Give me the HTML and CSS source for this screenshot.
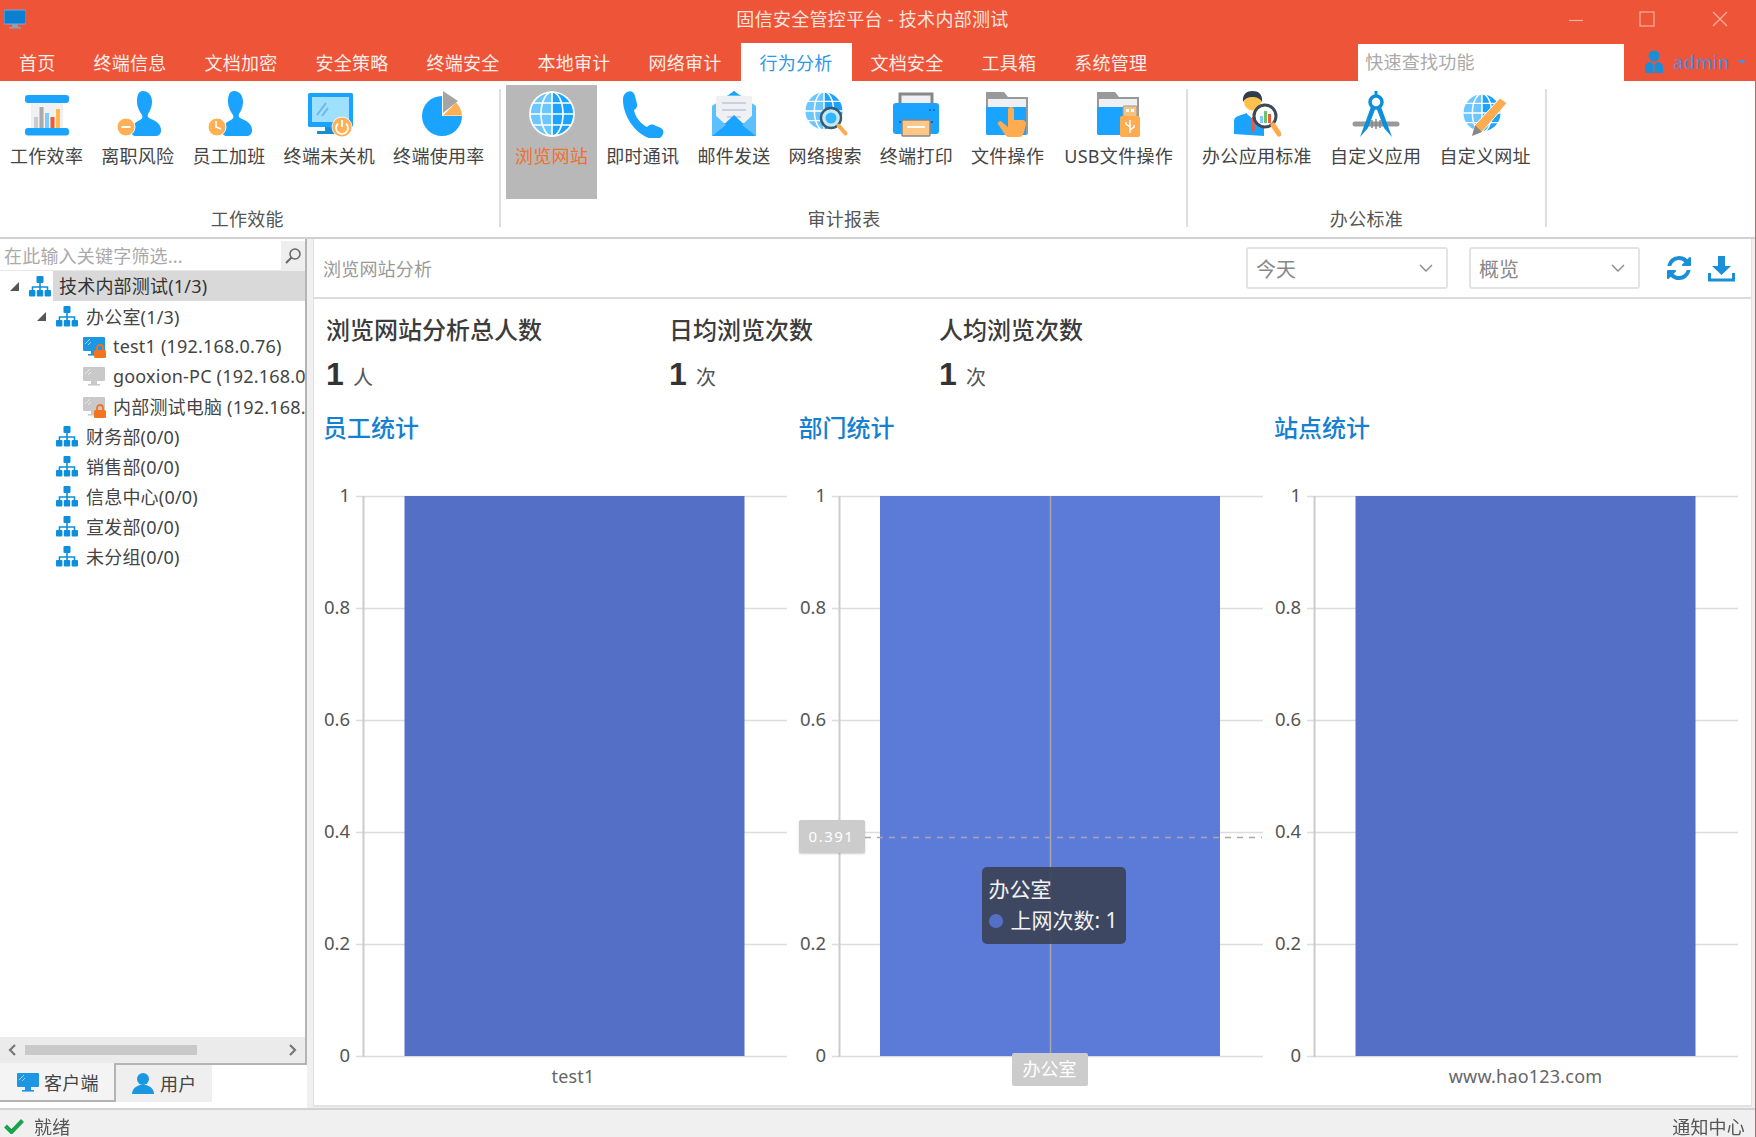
FILE: index.html
```html
<!DOCTYPE html>
<html lang="zh-CN">
<head>
<meta charset="utf-8">
<title>固信安全管控平台 - 技术内部测试</title>
<link rel="stylesheet" href="styles.css">
</head>
<body>
<svg class="defs" aria-hidden="true">
  <symbol id="org" viewBox="0 0 22 22">
    <path d="M11 8v4M3.5 15v-3h15v3M11 12v3" fill="none" stroke="#0d8fdb" stroke-width="1.6"/>
    <rect x="7.5" y="1" width="7" height="7" rx="1" fill="#0d8fdb"/>
    <rect x="0" y="15" width="6.4" height="6.4" rx="1" fill="#0d8fdb"/>
    <rect x="7.8" y="15" width="6.4" height="6.4" rx="1" fill="#0d8fdb"/>
    <rect x="15.6" y="15" width="6.4" height="6.4" rx="1" fill="#0d8fdb"/>
  </symbol>
  <symbol id="pc" viewBox="0 0 22 20">
    <rect x="0" y="1" width="22" height="14" rx="1" fill="currentColor"/>
    <rect x="8" y="15" width="6" height="3" fill="currentColor"/>
    <rect x="5" y="18" width="12" height="1.6" fill="currentColor"/>
    <path d="M2 8l5-5M5 9l3-3" stroke="#fff" stroke-opacity=".6" stroke-width="1"/>
  </symbol>
  <symbol id="lock" viewBox="0 0 12 14">
    <path d="M3 6V4a3 3 0 016 0v2" fill="none" stroke="#f4731f" stroke-width="1.8"/>
    <rect x="0" y="6" width="12" height="8" rx="1.5" fill="#f4731f"/>
  </symbol>
  <symbol id="person" viewBox="0 0 48 48">
    <path d="M29 1c6 0 9 5 9 11 0 5-2 9-4 12-1 2 0 4 3 5 5 2 10 5 10 11 0 4-2 6-6 6H22c-3 0-5-2-5-5 0-6 5-9 9-11 2-1 3-3 2-5-2-3-5-8-5-13 0-6 1-11 6-11z" fill="#1aa3ff"/>
  </symbol>
  <symbol id="globe" viewBox="0 0 48 48">
    <circle cx="24" cy="24" r="22" fill="#1aa3ff"/>
    <path d="M2 24a22 22 0 0122-22v44A22 22 0 012 24z" fill="#6cc6ff"/>
    <g fill="none" stroke="#fff" stroke-width="1.7">
      <circle cx="24" cy="24" r="22"/>
      <ellipse cx="24" cy="24" rx="11" ry="22"/>
      <path d="M24 2v44M4 13h40M2 24h44M4 35h40"/>
    </g>
  </symbol>
</svg>
<div class="window">
  <header class="titlebar">
    <div class="title-left">
      <svg class="app-icon" viewBox="0 0 22 20"><rect x="0" y="1" width="22" height="14" rx="1" fill="#0b7fd0" stroke="#7aa9d8"/><rect x="8" y="15" width="6" height="3" fill="#8aa0b5"/><rect x="5" y="18" width="12" height="1.5" fill="#8aa0b5"/></svg>
    </div>
    <div class="title-text">固信安全管控平台 - 技术内部测试</div>
    <div class="win-controls">
      <svg viewBox="0 0 16 16"><path d="M1 9.5h14" /></svg>
      <svg viewBox="0 0 16 16"><rect x="1" y="1" width="14" height="14" /></svg>
      <svg viewBox="0 0 16 16"><path d="M1 1l14 14M15 1L1 15" /></svg>
    </div>
  </header>

  <nav class="navbar">
    <a class="tab">首页</a>
    <a class="tab">终端信息</a>
    <a class="tab">文档加密</a>
    <a class="tab">安全策略</a>
    <a class="tab">终端安全</a>
    <a class="tab">本地审计</a>
    <a class="tab">网络审计</a>
    <a class="tab active">行为分析</a>
    <a class="tab">文档安全</a>
    <a class="tab">工具箱</a>
    <a class="tab">系统管理</a>
    <div class="quick-search">快速查找功能</div>
    <div class="account">
      <svg class="account-icon" viewBox="0 0 20 24"><circle cx="10" cy="6" r="5.5" fill="#1a8fd8"/><path d="M1 23v-6c0-3 3-5 6-5l3 3 3-3c3 0 6 2 6 5v6z" fill="#1a8fd8"/><path d="M10 15v8" stroke="#ee5437"/></svg>
      <span class="account-name">admin</span>
      <span class="account-caret"></span>
    </div>
  </nav>

  <section class="ribbon">
    <div class="group group-a">
      <div class="items">
        <div class="item">
          <svg class="ri" viewBox="0 0 48 48"><rect x="8" y="12" width="32" height="27" fill="#f1f1f1"/><rect x="11" y="27" width="4" height="11" fill="#c8ccd2"/><rect x="16.500" y="17" width="4" height="21" fill="#aaa"/><rect x="22" y="23" width="4" height="15" fill="#7ccbff"/><rect x="27.500" y="27" width="4" height="11" fill="#f05a3a"/><rect x="33" y="19" width="4" height="19" fill="#ffb84d"/><rect x="2" y="5" width="44" height="8" rx="3" fill="#1aa3ff"/><rect x="2" y="38" width="44" height="7.500" rx="3" fill="#1aa3ff"/></svg>
          <span>工作效率</span>
        </div>
        <div class="item">
          <svg class="ri" viewBox="0 0 48 48"><use href="#person"/><circle cx="12" cy="37" r="9" fill="#ffb055" stroke="#fff" stroke-width="1"/><path d="M7.500 37h9" stroke="#fff" stroke-width="2"/></svg>
          <span>离职风险</span>
        </div>
        <div class="item">
          <svg class="ri" viewBox="0 0 48 48"><use href="#person"/><circle cx="12" cy="37" r="9" fill="#ffb055" stroke="#fff" stroke-width="1"/><path d="M11 31v6l5 2" fill="none" stroke="#fff" stroke-width="1.600"/></svg>
          <span>员工加班</span>
        </div>
        <div class="item">
          <svg class="ri" viewBox="0 0 48 48"><rect x="3" y="3" width="45" height="34" rx="1.500" fill="#1aa3ff"/><rect x="7" y="7" width="37" height="25" fill="#9fe0ff"/><path d="M12 25l9-12M17 26l6-8" stroke="#6cb8e6" stroke-width="2"/><rect x="20" y="37" width="10" height="4" fill="#1a8fd0"/><rect x="12" y="41" width="24" height="3" fill="#1a8fd0"/><circle cx="37" cy="37" r="10" fill="#ffb055" stroke="#fff" stroke-width=".8"/><path d="M33 33.500a6 6 0 108 0M37 30v7" fill="none" stroke="#fff" stroke-width="1.800"/></svg>
          <span>终端未关机</span>
        </div>
        <div class="item">
          <svg class="ri" viewBox="0 0 48 48"><path d="M27 26V6a20 20 0 1020 20z" fill="#1aa3ff"/><path d="M28 25.500h19a20 20 0 00-6-13z" fill="#ffb055"/><path d="M28 23V1l15 10z" fill="#a5a5a5"/></svg>
          <span>终端使用率</span>
        </div>
      </div>
      <div class="group-label">工作效能</div>
    </div>
    <div class="sep"></div>
    <div class="group group-b">
      <div class="items">
        <div class="item selected">
          <svg class="ri" viewBox="0 0 48 48"><use href="#globe"/></svg>
          <span>浏览网站</span>
        </div>
        <div class="item">
          <svg class="ri" viewBox="0 0 48 48"><path d="M8 2c4-2 7 0 8 4l2 8c.5 3-1 5-3 6 1 7 7 14 13 17 2-2 4-3 7-2l7 3c3 2 3 5 1 8-2 3-6 4-10 3C16 45 4 25 4 10c0-4 1-6 4-8z" fill="#1aa3ff"/></svg>
          <span>即时通讯</span>
        </div>
        <div class="item">
          <svg class="ri" viewBox="0 0 48 48"><path d="M2 16L24 1l22 15v30H2z" fill="#5cc0ff"/><path d="M24 1l5 4H19z" fill="#1aa3ff"/><rect x="6" y="6" width="36" height="27" rx="1" fill="#eef0f3"/><path d="M12 13h24M12 20h24M17 27h14" stroke="#c9d2dc" stroke-width="2"/><path d="M2 46l22-21 22 21z" fill="#1aa3ff"/><path d="M2 22l14 13-14 11zM46 22L32 35l14 11z" fill="#5cc0ff"/></svg>
          <span>邮件发送</span>
        </div>
        <div class="item">
          <svg class="ri" viewBox="0 0 48 48"><svg x="2" y="0" width="42" height="42" viewBox="0 0 48 48"><use href="#globe"/></svg><circle cx="30" cy="28" r="10" fill="#bfeaff" stroke="#3d5a6c" stroke-width="2.400"/><circle cx="30" cy="28" r="5.500" fill="#35b4f5"/><path d="M37.500 35.500l7 8" stroke="#ffa94d" stroke-width="4" stroke-linecap="round"/></svg>
          <span>网络搜索</span>
        </div>
        <div class="item">
          <svg class="ri" viewBox="0 0 48 48"><path d="M8 16V4h32v12" fill="#eef0f3" stroke="#888" stroke-width="3"/><rect x="1" y="13" width="46" height="31" rx="3" fill="#1aa3ff"/><rect x="7" y="31" width="34" height="2" fill="#0c6fb8"/><rect x="10" y="30" width="28" height="16" rx="1" fill="#ffc786" stroke="#888" stroke-width="1.500"/><path d="M15 37h18" stroke="#fff" stroke-width="2"/><path d="M37 20h2M41 20h2" stroke="#0c6fb8" stroke-width="2"/></svg>
          <span>终端打印</span>
        </div>
        <div class="item">
          <svg class="ri" viewBox="0 0 48 48"><path d="M2 2h18l4 5h20v36a2 2 0 01-2 2H4a2 2 0 01-2-2z" fill="#999"/><rect x="4" y="9" width="38" height="16" fill="#eef0f3"/><path d="M2 17h40v28H4a2 2 0 01-2-2z" fill="#1aa3ff"/><path d="M27 17c2 0 3 1 3 3v10h8c3 0 4 2 4 4l-2 8c-1 3-2 5-5 5H25c-2 0-4-2-5-4l-6-9c-1-2 2-4 4-2l6 5V20c0-2 1-3 3-3z" fill="#ffac50"/></svg>
          <span>文件操作</span>
        </div>
        <div class="item usb">
          <svg class="ri" viewBox="0 0 48 48"><path d="M2 2h18l4 5h20v36a2 2 0 01-2 2H4a2 2 0 01-2-2z" fill="#999"/><rect x="4" y="9" width="38" height="16" fill="#eef0f3"/><path d="M2 17h40v28H4a2 2 0 01-2-2z" fill="#1aa3ff"/><rect x="28" y="16" width="14" height="11" rx="1" fill="#f6c27f" stroke="#999"/><rect x="31" y="19" width="3" height="3" fill="#fff"/><rect x="36" y="19" width="3" height="3" fill="#fff"/><rect x="25" y="26" width="20" height="21" rx="2" fill="#ffac50"/><path d="M35 30v13M35 37l-4-3v-2M35 40l4-3v-2" fill="none" stroke="#fff" stroke-width="1.500"/></svg>
          <span>USB文件操作</span>
        </div>
      </div>
      <div class="group-label">审计报表</div>
    </div>
    <div class="sep"></div>
    <div class="group group-c">
      <div class="items">
        <div class="item">
          <svg class="ri" viewBox="0 0 48 48"><path d="M1 44V31c0-3 3-5 7-6l6-2 6 5 5-5 6 2v21z" fill="#1aa3ff"/><path d="M14 24l6 5 5-5v-5H14z" fill="#fff"/><path d="M19 27h2l1 12-2 4-2-4z" fill="#f05a3a"/><circle cx="19.500" cy="12" r="8.500" fill="#ffc04d"/><path d="M10 12c-1-8 4-11 9.500-11S30 4 29 12c-2-4-6-5-9.500-5S12 8 10 12z" fill="#2e3d4d"/><circle cx="32" cy="26" r="11" fill="#fff" stroke="#3d4a55" stroke-width="3"/><rect x="27" y="26" width="3" height="7" fill="#7ccbff"/><rect x="31" y="21" width="3" height="12" fill="#6dc56b"/><rect x="35" y="24" width="3" height="9" fill="#f05a3a"/><path d="M40 35l6 9" stroke="#ffa94d" stroke-width="5" stroke-linecap="round"/></svg>
          <span>办公应用标准</span>
        </div>
        <div class="item">
          <svg class="ri" viewBox="0 0 48 48"><path d="M3 34h42" stroke="#999" stroke-width="5" stroke-linecap="round"/><path d="M20 14L8 47l8-9 8-21zM28 14l12 33-8-9-8-21z" fill="#0d8fdb"/><path d="M24 1v5" stroke="#0d8fdb" stroke-width="3"/><circle cx="24" cy="12" r="6" fill="#fff" stroke="#0d8fdb" stroke-width="3.500"/><path d="M24 29v10M20 30v8M28 30v8" stroke="#888" stroke-width="1.500"/></svg>
          <span>自定义应用</span>
        </div>
        <div class="item">
          <svg class="ri" viewBox="0 0 48 48"><svg x="0" y="2" width="42" height="42" viewBox="0 0 48 48"><use href="#globe"/></svg><path d="M39 8l7 5-25 29-10 4 3-11z" fill="#ffac50" stroke="#fff"/><path d="M14 35l7 7-10 4z" fill="#888"/></svg>
          <span>自定义网址</span>
        </div>
      </div>
      <div class="group-label">办公标准</div>
    </div>
    <div class="sep"></div>
  </section>

  <main class="body">
    <aside class="side">
      <div class="side-box">
        <div class="filter">
          <div class="filter-input">在此输入关键字筛选...</div>
          <div class="filter-btn"><svg viewBox="0 0 18 18"><circle cx="11" cy="7" r="5" fill="none" stroke="#666" stroke-width="1.500"/><path d="M7.500 10.500L2 16" stroke="#666" stroke-width="2"/></svg></div>
        </div>
        <ul class="tree">
          <li class="row lv1"><i class="tri"></i><svg class="org"><use href="#org"/></svg><span class="row-text">技术内部测试(1/3)</span></li>
          <li class="row lv2"><i class="tri"></i><svg class="org"><use href="#org"/></svg><span>办公室(1/3)</span></li>
          <li class="row lv3"><span class="pc-wrap on"><svg class="pc"><use href="#pc"/></svg><svg class="lock"><use href="#lock"/></svg></span><span>test1 (192.168.0.76)</span></li>
          <li class="row lv3"><span class="pc-wrap"><svg class="pc"><use href="#pc"/></svg></span><span>gooxion-PC (192.168.0</span></li>
          <li class="row lv3"><span class="pc-wrap"><svg class="pc"><use href="#pc"/></svg><svg class="lock"><use href="#lock"/></svg></span><span>内部测试电脑 (192.168.</span></li>
          <li class="row lv2b"><svg class="org"><use href="#org"/></svg><span>财务部(0/0)</span></li>
          <li class="row lv2b"><svg class="org"><use href="#org"/></svg><span>销售部(0/0)</span></li>
          <li class="row lv2b"><svg class="org"><use href="#org"/></svg><span>信息中心(0/0)</span></li>
          <li class="row lv2b"><svg class="org"><use href="#org"/></svg><span>宣发部(0/0)</span></li>
          <li class="row lv2b"><svg class="org"><use href="#org"/></svg><span>未分组(0/0)</span></li>
        </ul>
        <div class="hscroll">
          <svg class="arrow" viewBox="0 0 10 14"><path d="M8 2L3 7l5 5" /></svg>
          <div class="track"><div class="thumb"></div></div>
          <svg class="arrow" viewBox="0 0 10 14"><path d="M2 2l5 5-5 5" /></svg>
        </div>
      </div>
      <div class="side-tabs">
        <div class="side-tab first"><svg class="side-pc"><use href="#pc"/></svg>客户端</div>
        <div class="side-tab second"><svg class="side-user" viewBox="0 0 22 22"><circle cx="11" cy="7" r="6" fill="#1a97e3"/><path d="M0 22c0-5 4-8 8-9h6c4 1 8 4 8 9z" fill="#1a97e3"/></svg>用户</div>
      </div>
    </aside>

    <section class="content">
      <div class="toolbar">
        <div class="crumb">浏览网站分析</div>
        <div class="select s1"><span>今天</span><svg viewBox="0 0 16 10"><path d="M2 2l6 6 6-6"/></svg></div>
        <div class="select s2"><span>概览</span><svg viewBox="0 0 16 10"><path d="M2 2l6 6 6-6"/></svg></div>
        <svg class="tool-icon refresh" viewBox="0 0 1536 1536"><path d="M1511 928q0 5-1 7-64 268-268 434.5t-478 166.5q-146 0-282.5-55t-243.5-157l-129 129q-19 19-45 19t-45-19-19-45v-448q0-26 19-45t45-19h448q26 0 45 19t19 45-19 45l-137 137q71 66 161 102t187 36q134 0 250-65t186-179q11-17 53-117 8-23 30-23h192q13 0 22.5 9.5t9.5 22.5zm25-800v448q0 26-19 45t-45 19h-448q-26 0-45-19t-19-45 19-45l138-138q-148-137-349-137-134 0-250 65t-186 179q-11 17-53 117-8 23-30 23h-199q-13 0-22.5-9.5t-9.5-22.5v-7q65-268 270-434.5t480-166.500q146 0 284 55.500t245 156.500l130-129q19-19 45-19t45 19 19 45z"/></svg>
        <svg class="tool-icon download" viewBox="0 0 27 27"><path d="M10 1h7v10h6L13.500 20 4 11h6z"/><path d="M1.500 18v7h24v-7" fill="none" stroke="#1a8fd8" stroke-width="3"/></svg>
      </div>

      <div class="stats">
        <div class="stat">
          <div class="stat-label">浏览网站分析总人数</div>
          <div class="stat-value"><b>1</b><span>人</span></div>
        </div>
        <div class="stat">
          <div class="stat-label">日均浏览次数</div>
          <div class="stat-value"><b>1</b><span>次</span></div>
        </div>
        <div class="stat">
          <div class="stat-label">人均浏览次数</div>
          <div class="stat-value"><b>1</b><span>次</span></div>
        </div>
      </div>

      <div class="charts">
        <div class="chart-col">
          <h2>员工统计</h2>
          <div class="chart">
            <svg class="plot" viewBox="0 0 475 615">
              <g class="grid"><path d="M33 15.500h431M33 127.500h431M33 239.500h431M33 351.500h431M33 463.500h431M33 575.500h431"/><path class="axis" d="M40.500 15v561"/></g>
              <rect class="bar" x="81.500" y="15" width="340" height="560"/>
              <g class="ylab"><text x="27" y="21">1</text><text x="27" y="133">0.8</text><text x="27" y="245">0.6</text><text x="27" y="357">0.4</text><text x="27" y="469">0.2</text><text x="27" y="581">0</text></g>
              <text class="xlab" x="250" y="602">test1</text>
            </svg>
          </div>
        </div>
        <div class="chart-col">
          <h2>部门统计</h2>
          <div class="chart">
            <svg class="plot" viewBox="0 0 475 615">
              <g class="grid"><path d="M33 15.500h431M33 127.500h431M33 239.500h431M33 351.500h431M33 463.500h431M33 575.500h431"/><path class="axis" d="M40.500 15v561"/></g>
              <rect class="bar hot" x="81" y="15" width="340" height="560"/>
              <g class="ylab"><text x="27" y="21">1</text><text x="27" y="133">0.8</text><text x="27" y="245">0.6</text><text x="27" y="469">0.2</text><text x="27" y="581">0</text></g>
              <path class="cross-v" d="M251.500 15v560"/>
              <path class="cross-h" d="M66 356.500h397"/>
            </svg>
            <div class="pointer-y">0.391</div>
            <div class="pointer-x">办公室</div>
            <div class="tooltip">
              <div>办公室</div>
              <div class="tip-row"><i class="dot"></i>上网次数: 1</div>
            </div>
          </div>
        </div>
        <div class="chart-col">
          <h2>站点统计</h2>
          <div class="chart">
            <svg class="plot" viewBox="0 0 475 615">
              <g class="grid"><path d="M33 15.500h431M33 127.500h431M33 239.500h431M33 351.500h431M33 463.500h431M33 575.500h431"/><path class="axis" d="M40.500 15v561"/></g>
              <rect class="bar" x="81.500" y="15" width="340" height="560"/>
              <g class="ylab"><text x="27" y="21">1</text><text x="27" y="133">0.8</text><text x="27" y="245">0.6</text><text x="27" y="357">0.4</text><text x="27" y="469">0.2</text><text x="27" y="581">0</text></g>
              <text class="xlab" x="251.500" y="602">www.hao123.com</text>
            </svg>
          </div>
        </div>
      </div>
    </section>
  </main>

  <footer class="status">
    <svg class="ok" viewBox="0 0 20 16"><path d="M1.500 8l6 6L18.500 2.500" fill="none" stroke="#17a34a" stroke-width="4"/></svg>
    <span class="status-text">就绪</span>
    <span class="notify">通知中心</span>
  </footer>
</div>
</body>
</html>
```

FILE: styles.css
```css
* { box-sizing: border-box; }
html, body { margin: 0; padding: 0; }
body {
  width: 1756px;
  height: 1137px;
  overflow: hidden;
  background: #fff;
  font-family: "Noto Sans", "Noto Sans CJK SC", sans-serif;
  font-size: 18px;
  letter-spacing: .2px;
  color: #444;
}
.defs { position: absolute; width: 0; height: 0; }
.window {
  width: 1756px;
  height: 1137px;
  display: flex;
  flex-direction: column;
  background: #f0f0f0;
  border-right: 1px solid #ee5437;
  filter: blur(.55px);
}

/* title bar */
.titlebar {
  height: 43px;
  flex: none;
  background: #ee5437;
  display: grid;
  grid-template-columns: 1fr auto 1fr;
  align-items: center;
  color: #fbe4de;
  letter-spacing: .3px;
}
.title-left { display: flex; padding-left: 4px; }
.app-icon { width: 22px; height: 20px; margin-top: -5px; }
.title-text { line-height: 38px; margin: -5px 10px 0 0; white-space: nowrap; }
.win-controls { display: flex; justify-content: flex-end; gap: 57px; padding-right: 27px; margin-top: -5px; }
.win-controls svg { width: 16px; height: 16px; fill: none; stroke: #f6b1a1; stroke-width: 1.2; }
.win-controls svg:first-child { margin-right: -2px; }

/* nav */
.navbar {
  height: 38px;
  flex: none;
  background: #ee5437;
  display: flex;
  align-items: stretch;
  color: #fdeee9;
  letter-spacing: .25px;
}
.tab { padding: 0 19px; line-height: 40px; white-space: nowrap; }
.tab.active { background: #fff; color: #2f97e6; }
.quick-search {
  width: 266px;
  margin: 1px 0 0 192px;
  background: #fff;
  color: #aaa;
  padding-left: 7px;
  line-height: 36px;
}
.account { display: flex; align-items: center; padding-left: 20px; }
.account-icon { width: 20px; height: 24px; margin-right: 9px; }
.account-name { color: #4a8ee4; letter-spacing: .5px; }
.account-caret { width: 0; height: 0; margin-left: 8px; border: 4px solid transparent; border-top-color: #4a8ee4; border-bottom: 0; }

/* ribbon */
.ribbon {
  height: 158px;
  flex: none;
  background: #fff;
  border-bottom: 2px solid #d0d0d0;
  display: flex;
  padding-top: 4px;
  letter-spacing: .3px;
}
.group { display: flex; flex-direction: column; flex: none; }
.group-a { padding: 0 5.400px 0 1px; }
.group-b { padding: 0 4px 0 5px; }
.group-c { padding: 0 5px 0 5px; }
.items { display: flex; height: 114px; }
.item {
  display: flex;
  flex-direction: column;
  align-items: center;
  padding: 5px 9px 0;
  white-space: nowrap;
  color: #444;
}
.item.usb { padding-left: 11px; }
.item .ri { width: 48px; height: 48px; flex: none; }
.item span { line-height: 24px; margin-top: 6px; }
.item.selected { background: #b8b8b8; }
.item.selected span { color: #f07030; }
.group-label { text-align: center; line-height: 24px; margin-top: 8px; color: #555; }
.sep { width: 2px; height: 138px; margin-top: 4px; background: #dedede; flex: none; }

/* body */
.body { flex: 1; display: flex; min-height: 0; padding-right: 3px; }
.side { width: 307px; flex: none; display: flex; flex-direction: column; background: #fff; padding-bottom: 6px; }
.side-box { flex: 1; min-height: 0; display: flex; flex-direction: column; border-right: 2px solid #b4b4b4; border-bottom: 2px solid #b4b4b4; }
.filter { height: 32px; flex: none; display: flex; padding-top: 2px; }
.filter-input { flex: 1; color: #aaa; padding-left: 4px; line-height: 30px; border-bottom: 1px solid #e8e8e8; white-space: nowrap; }
.filter-btn { width: 24px; background: #eee; display: flex; align-items: center; justify-content: center; }
.filter-btn svg { width: 18px; height: 18px; }
.tree { list-style: none; margin: 0; padding: 0; flex: 1; overflow: hidden; }
.row { height: 30px; display: flex; align-items: center; white-space: nowrap; overflow: hidden; color: #444; }
.tri { width: 0; height: 0; border-style: solid; border-width: 0 0 9px 9px; border-color: transparent transparent #555 transparent; flex: none; }
.org { width: 22px; height: 22px; flex: none; margin-right: 8px; }
.lv1 { padding-left: 10px; }
.lv1 .tri { margin-right: 10px; }
.lv1 .org { margin-right: 2px; }
.row-text { background: #d9d9d9; flex: 1; line-height: 30px; padding-left: 6px; color: #333; }
.lv2 { padding-left: 37px; }
.lv2 .tri { margin-right: 10px; }
.lv2b { padding-left: 56px; }
.lv3 { padding-left: 83px; }
.pc-wrap { position: relative; width: 22px; height: 20px; margin-right: 8px; color: #c9c9c9; flex: none; }
.pc-wrap.on { color: #1d97e3; }
.pc { width: 22px; height: 20px; display: block; }
.lock { position: absolute; right: -1px; bottom: -2px; width: 12px; height: 14px; }
.hscroll { height: 26px; flex: none; background: #ebebeb; display: flex; align-items: center; }
.arrow { width: 10px; height: 14px; margin: 0 7px; fill: none; stroke: #777; stroke-width: 2.2; flex: none; }
.track { flex: 1; }
.thumb { width: 172px; height: 10px; background: #c9c9c9; margin-left: 1px; }
.side-tabs { height: 37px; flex: none; display: flex; }
.side-tab { display: flex; align-items: center; }
.side-tab.first { width: 116px; height: 39px; margin-top: -2px; padding-left: 17px; background: #f4f4f4; border-right: 2px solid #b4b4b4; border-bottom: 2px solid #b4b4b4; }
.side-tab.second { width: 96px; height: 37px; padding: 0 0 2px 16px; background: #efefef; }
.side-pc { width: 22px; height: 20px; color: #1d97e3; margin-right: 5px; }
.side-user { width: 22px; height: 22px; margin-right: 6px; }

/* content */
.content {
  flex: 1;
  min-width: 0;
  margin: 0 0 1px 6px;
  background: #fff;
  border: 1px solid #e2e2e2;
  border-top: 0;
  border-bottom: 2px solid #e2e2e2;
}
.toolbar { height: 60px; display: flex; align-items: center; padding: 0 16px 0 9px; border-bottom: 2px solid #dcdcdc; }
.crumb { color: #999; flex: 1; }
.select {
  height: 42px;
  border: 2px solid #e3e3e3;
  border-radius: 3px;
  display: flex;
  align-items: center;
  justify-content: space-between;
  padding: 0 12px 0 8px;
  color: #888;
  font-size: 20px;
  letter-spacing: 0;
}
.select svg { width: 16px; height: 10px; fill: none; stroke: #888; stroke-width: 1.4; }
.s1 { width: 202px; margin-right: 21px; }
.s2 { width: 171px; margin-right: 27px; }
.tool-icon { fill: #1a8fd8; }
.refresh { width: 24px; height: 24px; margin-right: 17px; }
.download { width: 27px; height: 27px; }

.stats { display: flex; padding: 13px 0 0 12px; letter-spacing: 0; }
.stat:nth-child(1) { width: 343px; }
.stat:nth-child(2) { width: 270px; }
.stat-label { font-size: 24px; line-height: 36px; color: #3c3c3c; font-weight: 500; }
.stat-value { display: flex; align-items: baseline; line-height: 40px; margin-top: 6px; height: 40px; }
.stat-value b { font-size: 32px; color: #333; width: 27px; font-family: "Liberation Sans", sans-serif; }
.stat-value span { font-size: 20px; color: #555; }

.charts { display: grid; grid-template-columns: repeat(3, 475.5px); padding: 16px 0 0 9px; letter-spacing: 0; }
.chart-col h2 { margin: 0 0 35px; font-size: 24px; font-weight: 500; line-height: 36px; color: #1580d0; }
.chart { position: relative; height: 615px; }
.plot { display: block; width: 475px; height: 615px; overflow: visible; }
.grid path { fill: none; stroke: #dcdcdc; stroke-width: 1.5; }
.grid .axis { stroke: #ccc; stroke-width: 2; }
.bar { fill: #5470c6; }
.bar.hot { fill: #5c7ad8; }
.ylab text { text-anchor: end; font-size: 18.500px; fill: #555; }
.xlab { text-anchor: middle; font-size: 18px; letter-spacing: .2px; fill: #666; }
.cross-v { stroke: #a8a8a8; stroke-width: 1.5; fill: none; }
.cross-h { stroke: #a8a8a8; stroke-width: 1.5; stroke-dasharray: 6 6; fill: none; }
.pointer-y, .pointer-x {
  position: absolute;
  height: 33px;
  background: #ccc;
  color: #fff;
  text-align: center;
  line-height: 32px;
  border-radius: 2px;
}
.pointer-y { left: 0; top: 339px; width: 66px; font-size: 15px; letter-spacing: 1.5px; box-shadow: 0 1px 2px rgba(0,0,0,.2); }
.pointer-x { left: 213px; top: 572px; width: 76px; }
.tooltip {
  position: absolute;
  left: 183px;
  top: 386px;
  width: 144px;
  height: 77px;
  padding: 7px 7px;
  background: rgba(60,66,87,.92);
  border-radius: 5px;
  color: #f2f2f2;
  font-size: 21px;
  line-height: 31px;
  white-space: nowrap;
}
.tip-row { display: flex; align-items: center; }
.dot { width: 14px; height: 14px; border-radius: 50%; background: #5470c6; margin-right: 8px; }

/* status */
.status {
  height: 29px;
  flex: none;
  background: #f0f0f0;
  border-top: 2px solid #d2d2d2;
  display: flex;
  align-items: center;
  padding: 5px 10px 0 4px;
  color: #555;
}
.ok { width: 20px; height: 16px; margin-right: 10px; }
.status-text { flex: 1; }
```
